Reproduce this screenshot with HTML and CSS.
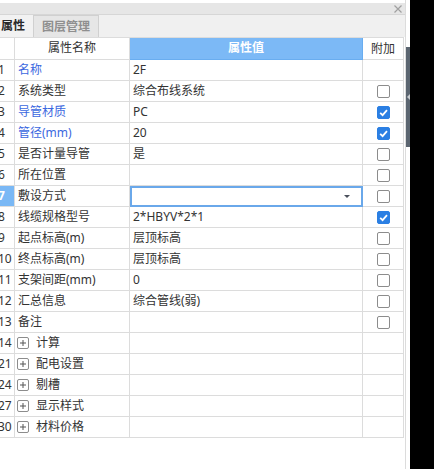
FILE: index.html
```html
<!DOCTYPE html>
<html lang="zh">
<head>
<meta charset="utf-8">
<title>属性</title>
<link rel="stylesheet" href="styles.css">
</head>
<body>
<div class="page">
  <div class="panel">
    <div class="titlebar">
      <svg class="close" width="8" height="8" viewBox="0 0 8 8"><path d="M0.5 0.5 L7.5 7.5 M7.5 0.5 L0.5 7.5" stroke="#a0a0a0" stroke-width="1.2" fill="none"/></svg>
    </div>
    <div class="tabs">
      <div class="tab active">属性</div>
      <div class="tab">图层管理</div>
    </div>
    <div class="grid">
      <div class="row head">
        <div class="c num"></div>
        <div class="c name center">属性名称</div>
        <div class="c val hval">属性值</div>
        <div class="c add center">附加</div>
      </div>
      <div class="row"><div class="c num">1</div><div class="c name blue">名称</div><div class="c val">2F</div><div class="c add"></div></div>
      <div class="row"><div class="c num">2</div><div class="c name">系统类型</div><div class="c val">综合布线系统</div><div class="c add"><span class="cb"></span></div></div>
      <div class="row"><div class="c num">3</div><div class="c name blue">导管材质</div><div class="c val">PC</div><div class="c add"><span class="cb on"><svg width="13" height="13" viewBox="0 0 13 13"><path d="M3.2 6.8 L5.6 9.1 L10 4.2" stroke="#fff" stroke-width="1.8" fill="none"/></svg></span></div></div>
      <div class="row"><div class="c num">4</div><div class="c name blue">管径(mm)</div><div class="c val">20</div><div class="c add"><span class="cb on"><svg width="13" height="13" viewBox="0 0 13 13"><path d="M3.2 6.8 L5.6 9.1 L10 4.2" stroke="#fff" stroke-width="1.8" fill="none"/></svg></span></div></div>
      <div class="row"><div class="c num">5</div><div class="c name">是否计量导管</div><div class="c val">是</div><div class="c add"><span class="cb"></span></div></div>
      <div class="row"><div class="c num">6</div><div class="c name">所在位置</div><div class="c val"></div><div class="c add"><span class="cb"></span></div></div>
      <div class="row"><div class="c num sel">7</div><div class="c name">敷设方式</div><div class="c val edit"><span class="caret"></span></div><div class="c add"><span class="cb"></span></div></div>
      <div class="row"><div class="c num">8</div><div class="c name">线缆规格型号</div><div class="c val">2*HBYV*2*1</div><div class="c add"><span class="cb on"><svg width="13" height="13" viewBox="0 0 13 13"><path d="M3.2 6.8 L5.6 9.1 L10 4.2" stroke="#fff" stroke-width="1.8" fill="none"/></svg></span></div></div>
      <div class="row"><div class="c num">9</div><div class="c name">起点标高(m)</div><div class="c val">层顶标高</div><div class="c add"><span class="cb"></span></div></div>
      <div class="row"><div class="c num">10</div><div class="c name">终点标高(m)</div><div class="c val">层顶标高</div><div class="c add"><span class="cb"></span></div></div>
      <div class="row"><div class="c num">11</div><div class="c name">支架间距(mm)</div><div class="c val">0</div><div class="c add"><span class="cb"></span></div></div>
      <div class="row"><div class="c num">12</div><div class="c name">汇总信息</div><div class="c val">综合管线(弱)</div><div class="c add"><span class="cb"></span></div></div>
      <div class="row"><div class="c num">13</div><div class="c name">备注</div><div class="c val"></div><div class="c add"><span class="cb"></span></div></div>
      <div class="row"><div class="c num">14</div><div class="c name group"><span class="plus"><svg width="10" height="10" viewBox="0 0 10 10"><path d="M2 5 H8 M5 2 V8" stroke="#555" stroke-width="1"/></svg></span>计算</div><div class="c val"></div><div class="c add"></div></div>
      <div class="row"><div class="c num">21</div><div class="c name group"><span class="plus"><svg width="10" height="10" viewBox="0 0 10 10"><path d="M2 5 H8 M5 2 V8" stroke="#555" stroke-width="1"/></svg></span>配电设置</div><div class="c val"></div><div class="c add"></div></div>
      <div class="row"><div class="c num">24</div><div class="c name group"><span class="plus"><svg width="10" height="10" viewBox="0 0 10 10"><path d="M2 5 H8 M5 2 V8" stroke="#555" stroke-width="1"/></svg></span>剔槽</div><div class="c val"></div><div class="c add"></div></div>
      <div class="row"><div class="c num">27</div><div class="c name group"><span class="plus"><svg width="10" height="10" viewBox="0 0 10 10"><path d="M2 5 H8 M5 2 V8" stroke="#555" stroke-width="1"/></svg></span>显示样式</div><div class="c val"></div><div class="c add"></div></div>
      <div class="row"><div class="c num">30</div><div class="c name group"><span class="plus"><svg width="10" height="10" viewBox="0 0 10 10"><path d="M2 5 H8 M5 2 V8" stroke="#555" stroke-width="1"/></svg></span>材料价格</div><div class="c val"></div><div class="c add"></div></div>
    </div>
  </div>
  <div class="gutter"><div class="thumb"><span class="arrow"></span></div></div>
  <div class="dark"></div>
</div>
</body>
</html>
```

FILE: styles.css
```css
html, body {
  margin: 0;
  padding: 0;
  background: #fff;
}
body {
  font-family: "Noto Sans", "Noto Sans CJK SC", sans-serif;
  font-size: 12px;
  color: #333;
}
.page {
  display: flex;
  height: 469px;
  overflow: hidden;
}
.panel {
  flex: none;
  width: 406px;
  box-sizing: border-box;
  border-right: 1px solid #dcdcdc;
  padding-top: 3px;
}
.titlebar {
  height: 11px;
  background: #e6e6e6;
  display: flex;
  justify-content: flex-end;
  align-items: center;
  padding-right: 3px;
}
.close {
  display: block;
}
.tabs {
  height: 22px;
  border-top: 1px solid #d6d6d6;
  background: #f0f0f0;
  display: flex;
}
.tab {
  box-sizing: border-box;
  height: 22px;
  line-height: 21px;
  font-weight: bold;
  font-size: 12px;
  border-right: 1px solid #d0d0d0;
}
.tab.active {
  width: 34px;
  padding-left: 1px;
  color: #2a2a2a;
  background: #f2f2f2;
}
.tab:not(.active) {
  width: 65px;
  text-align: center;
  color: #8f8f8f;
  background: #e6e6e6;
  border-top: 1px solid #d0d0d0;
}
.grid {
  display: flex;
  flex-direction: column;
  width: 404px;
}
.row {
  display: grid;
  grid-template-columns: 15px 115px 233px 41px;
  height: 21px;
}
.row.head {
  height: 22px;
  border-top: 1px solid #dcdcdc;
}
.c {
  box-sizing: border-box;
  border-right: 1px solid #dcdcdc;
  border-bottom: 1px solid #dcdcdc;
  line-height: 20px;
  white-space: nowrap;
  overflow: hidden;
}
.num {
  text-indent: -2px;
}
.num.sel {
  background: #7ab8f5;
  color: #fff;
  font-weight: bold;
}
.name, .val {
  padding-left: 3px;
}
.center {
  text-align: center;
  padding-left: 0;
}
.hval {
  background: #7cb9f6;
  color: #fff;
  text-align: center;
  padding-left: 0;
  font-weight: bold;
  border-color: #69adf0;
}
.blue {
  color: #3b68e0;
}
.add {
  display: flex;
  align-items: center;
  justify-content: center;
}
.cb {
  box-sizing: border-box;
  width: 13px;
  height: 13px;
  border: 1px solid #8c8c8c;
  border-radius: 2px;
  background: #fff;
  position: relative;
  display: block;
  margin-left: 1px;
}
.cb.on {
  background: #2b7fe3;
  border-color: #2b7fe3;
}
.cb svg {
  position: absolute;
  left: -1px;
  top: -1px;
}
.edit {
  outline: 2px solid #6aa8ea;
  outline-offset: -2px;
  display: flex;
  align-items: center;
  justify-content: flex-end;
  padding-right: 12px;
}
.caret {
  width: 0;
  height: 0;
  border-left: 3px solid transparent;
  border-right: 3px solid transparent;
  border-top: 3px solid #4a505c;
}
.group {
  display: flex;
  align-items: center;
  padding-left: 2px;
}
.plus {
  box-sizing: border-box;
  width: 12px;
  height: 12px;
  border: 1px solid #8c8c8c;
  border-radius: 2px;
  margin-right: 7px;
  display: flex;
  align-items: center;
  justify-content: center;
}
.plus svg {
  display: block;
}
.gutter {
  flex: none;
  width: 4px;
  background: #fff;
  display: flex;
  flex-direction: column;
}
.thumb {
  margin-top: 47px;
  height: 100px;
  background: #5b6570;
  display: flex;
  align-items: center;
  justify-content: center;
}
.arrow {
  width: 0;
  height: 0;
  border-top: 3px solid transparent;
  border-bottom: 3px solid transparent;
  border-right: 3px solid #c8ccd0;
}
.dark {
  flex: 1;
  background: #000;
}
```
